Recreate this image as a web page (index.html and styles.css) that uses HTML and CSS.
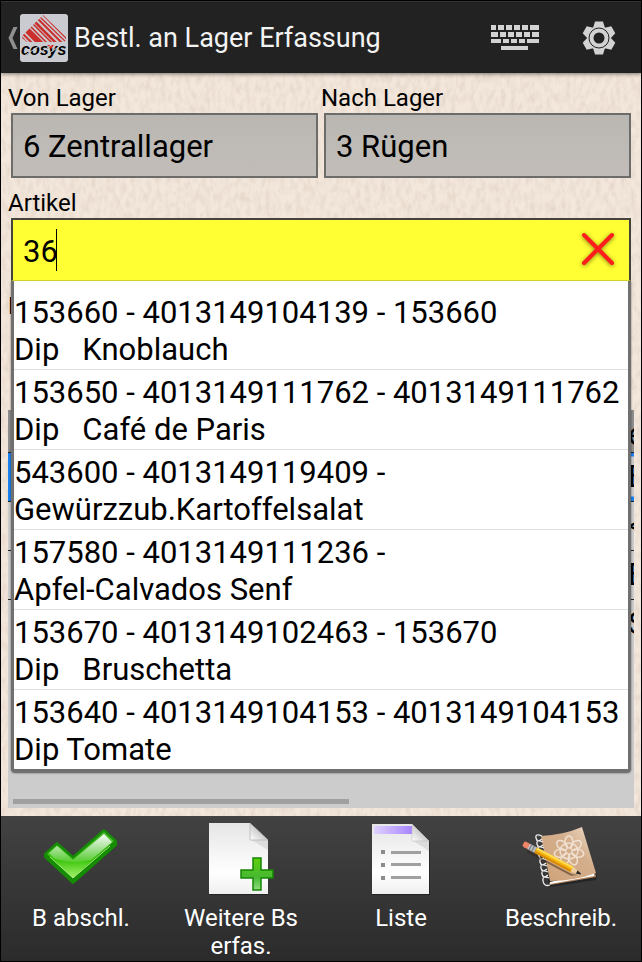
FILE: index.html
```html
<!DOCTYPE html>
<html lang="de">
<head>
    <meta charset="UTF-8">
    <meta name="viewport" content="width=device-width, initial-scale=1">
    <title>Bestl. an Lager Erfassung</title>
    <link rel="stylesheet" href="styles.css">
</head>
<body>
    <header class="topbar">
        <button class="back" type="button" aria-label="Zurück">
            <svg class="chevron" viewBox="0 0 12 22"><path d="M10.500 0h-4L1.500 11l5 11h4l-5-11z" fill="#8f8f8f"/></svg>
            <svg class="logo" viewBox="0 0 48 48">
                <defs>
                    <clipPath id="dach"><path d="M23 1 2 22v2l5 4h37l2-2v-3z"/></clipPath>
                </defs>
                <rect width="48" height="48" rx="3" fill="#c9cbd0"/>
                <g clip-path="url(#dach)" stroke="#cb2f2c" fill="none">
                    <path d="M0 22l9 9" stroke-width="2"/>
                    <path d="M2 19l12 12" stroke-width="2"/>
                    <path d="M6 15l16 16" stroke-width="6"/>
                    <path d="M9 11l20 20M12 9l22 22" stroke-width="1.500"/>
                    <path d="M14 7l24 24" stroke-width="2.500"/>
                    <path d="M17 4l26 26" stroke-width="2"/>
                    <path d="M20 3l28 27M23 1l28 28" stroke-width="1.300"/>
                </g>
                <text x="1" y="41" class="logo-text">cosys</text>
                <path d="M27 31h7l-3 4z" fill="#e02a20"/>
                <path d="M1 44 22 30M12 44l21-14M22 44l21-14" stroke="#c9cbd0" stroke-width="1"/>
            </svg>
        </button>
        <h1>Bestl. an Lager Erfassung</h1>
        <button class="action" type="button" aria-label="Tastatur">
            <svg class="keyboard" viewBox="0 0 48 26" fill="#d2d2d2">
                <path d="M0 0h5v5H0zM7 0h6v5H7zM15 0h6v5h-6zM23 0h6v5h-6zM31 0h6v5h-6zM39 0h9v5h-9z"/>
                <path d="M0 7h7v5H0zM9 7h6v5H9zM17 7h6v5h-6zM25 7h6v5h-6zM33 7h6v5h-6zM41 7h7v5h-7z"/>
                <path d="M0 14h10v4H0zM12 14h6v4h-6zM20 14h6v4h-6zM28 14h6v4h-6zM36 14h12v4H36zM10 21h27v4H10z"/>
            </svg>
        </button>
        <button class="action" type="button" aria-label="Einstellungen">
            <svg class="gear" viewBox="-17 -17 34 34">
                <g fill="#d2d2d2">
                    <circle r="12"/>
                    <path id="zahn" d="M-6-10l2-6.500h8l2 6.500z"/>
                    <use href="#zahn" transform="rotate(60)"/>
                    <use href="#zahn" transform="rotate(120)"/>
                    <use href="#zahn" transform="rotate(180)"/>
                    <use href="#zahn" transform="rotate(240)"/>
                    <use href="#zahn" transform="rotate(300)"/>
                </g>
                <circle r="10" fill="none" stroke="#222" stroke-width="1"/>
                <circle r="5.500" fill="#222"/>
            </svg>
        </button>
    </header>

    <main class="content">
        <!-- Papierstruktur -->
        <svg class="paper" aria-hidden="true">
            <filter id="papier" x="0" y="0" width="100%" height="100%">
                <feTurbulence type="fractalNoise" baseFrequency="0.2 0.1" numOctaves="4" seed="4"/>
                <feColorMatrix values="0 0 0 0 .5  0 0 0 0 .42  0 0 0 0 .34  .5 0 0 0 -.19"/>
            </filter>
            <rect width="100%" height="100%" filter="url(#papier)"/>
        </svg>

        <div class="row">
            <div class="group">
                <label for="von">Von Lager</label>
                <input class="field" type="text" id="von" value="6 Zentrallager" readonly>
            </div>
            <div class="group">
                <label for="nach">Nach Lager</label>
                <input class="field" type="text" id="nach" value="3 Rügen" readonly>
            </div>
        </div>

        <div class="group">
            <label for="artikel">Artikel</label>
            <div class="search">
                <input class="field active" type="text" id="artikel" value="36" autocomplete="off">
                <span class="caret"></span>
                <button class="clear" type="button" aria-label="Löschen">
                    <svg viewBox="0 0 36 36"><path d="M4 4l28 28M32 4L4 32" stroke="#ff1c1c" stroke-width="4" stroke-linecap="round"/></svg>
                </button>
                <ul class="suggestions">
                    <li>153660 - 4013149104139 - 153660<br>Dip   Knoblauch</li>
                    <li>153650 - 4013149111762 - 4013149111762<br>Dip   Café de Paris</li>
                    <li>543600 - 4013149119409 -<br>Gewürzzub.Kartoffelsalat</li>
                    <li>157580 - 4013149111236 -<br>Apfel-Calvados Senf</li>
                    <li>153670 - 4013149102463 - 153670<br>Dip   Bruschetta</li>
                    <li>153640 - 4013149104153 - 4013149104153<br>Dip Tomate</li>
                </ul>
            </div>
        </div>

        <div class="group">
            <label for="menge">Menge</label>
            <input class="field" type="text" id="menge">
        </div>

        <div class="list">
            <table>
                <thead><tr><th></th><th class="edge">e</th></tr></thead>
                <tbody>
                    <tr class="selected"><td></td><td class="edge">E</td></tr>
                    <tr><td></td><td class="edge">&lt;</td></tr>
                    <tr><td></td><td class="edge">E</td></tr>
                    <tr><td></td><td class="edge">S</td></tr>
                </tbody>
            </table>
            <div class="scrollbar"></div>
        </div>
    </main>

    <nav class="bottombar">
        <button type="button">
            <svg viewBox="0 0 72 72">
                <defs>
                    <linearGradient id="gruen" x1="0" y1="0" x2="0" y2="1">
                        <stop offset="0" stop-color="#4dbb35"/><stop offset=".6" stop-color="#38c40a"/><stop offset="1" stop-color="#a5f26a"/>
                    </linearGradient>
                    <linearGradient id="glanz" x1="0" y1="0" x2="0" y2="1">
                        <stop offset="0" stop-color="#fff" stop-opacity=".95"/><stop offset="1" stop-color="#fff" stop-opacity=".15"/>
                    </linearGradient>
                </defs>
                <path d="M1 31v4l27 26 44-38v-5L59 8 28 35 12 21z" fill="#0c4d04" opacity=".6"/>
                <path d="M0 31 12 20l16 14L59 7l12 11v4L28 60 0 34z" fill="#168c05" stroke="#168c05" stroke-width="2" stroke-linejoin="round"/>
                <path d="M2 31l10-9 16 14L59 9l10 9-41 37z" fill="url(#gruen)"/>
                <path d="M4 30l8-7 16 14 31-26 8 8-21 18q-18 4-36-1z" fill="url(#glanz)"/>
                <path d="M5 34l23 21 37-32" fill="none" stroke="#a4ee76" stroke-width="1"/>
            </svg>
            <span>B abschl.</span>
        </button>
        <button type="button">
            <svg viewBox="0 0 72 72">
                <defs>
                    <linearGradient id="blatt" x1="0" y1="0" x2="0" y2="1">
                        <stop offset="0" stop-color="#e6e6e6"/><stop offset=".7" stop-color="#fff"/><stop offset="1" stop-color="#efefef"/>
                    </linearGradient>
                    <linearGradient id="ecke" x1="0" y1="1" x2="1" y2="0">
                        <stop offset="0" stop-color="#fff"/><stop offset=".6" stop-color="#c4c4c4"/>
                    </linearGradient>
                    <linearGradient id="plus" x1="0" y1="0" x2="0" y2="1">
                        <stop offset="0" stop-color="#5fd00a"/><stop offset=".6" stop-color="#46b832"/><stop offset="1" stop-color="#90dc80"/>
                    </linearGradient>
                </defs>
                <path d="M4 0h42l17 18v54H4z" fill="#111" opacity=".5"/>
                <path d="M4 0h41l18 17v54H4z" fill="url(#blatt)"/>
                <path d="M45 16l18 1v10z" fill="#cfcfcf" opacity=".6"/>
                <path d="M45 0l18 17H45z" fill="url(#ecke)" stroke="#aaa" stroke-width=".6"/>
                <path d="M48 35h8v12h12v8H56v12h-8V55H36v-8h12z" fill="url(#plus)" stroke="#168505" stroke-width="1.500"/>
            </svg>
            <span>Weitere Bs erfas.</span>
        </button>
        <button type="button">
            <svg viewBox="0 0 72 72">
                <defs>
                    <linearGradient id="lila">
                        <stop offset="0" stop-color="#e0d2ff"/><stop offset="1" stop-color="#a885ff"/>
                    </linearGradient>
                </defs>
                <path d="M7 2h41l17 17v53H7z" fill="#111" opacity=".5"/>
                <path d="M7 1h40l17 17v53H7z" fill="url(#blatt)"/>
                <path d="M9 3h38v8H9z" fill="url(#lila)"/>
                <path d="M47 17l17 1v10z" fill="#cfcfcf" opacity=".6"/>
                <path d="M47 1l17 17H47z" fill="url(#ecke)" stroke="#bbb" stroke-width=".5"/>
                <path d="M16 27h4v4h-4zM16 40h4v4h-4zM16 53h4v4h-4z" fill="#8c8c8c"/>
                <path d="M26 28h30v3H26zM26 40h30v3H26zM26 53h30v3H26z" fill="#a0a0a0"/>
            </svg>
            <span>Liste</span>
        </button>
        <button type="button">
            <svg viewBox="0 0 72 72">
                <defs>
                    <linearGradient id="buch" x1="1" y1="0" x2="0" y2="1">
                        <stop offset="0" stop-color="#f1dfcc"/><stop offset=".4" stop-color="#d3ae8c"/><stop offset="1" stop-color="#cfa37a"/>
                    </linearGradient>
                </defs>
                <path d="M18 15l39-9 15 47-1 4-47 7z" fill="#111" opacity=".5"/>
                <path d="M24 60l46-11 1 5-46 8z" fill="#b78a63"/>
                <path d="M25 59l44-10v4l-44 8z" fill="#fff"/>
                <path d="M16 13q22-1 41-9l14 46q-21 8-46 8z" fill="url(#buch)"/>
                <g fill="none" stroke="#f5e9dc" stroke-width="1.500" opacity=".85">
                    <ellipse id="blatt1" cx="44" cy="19" rx="4" ry="6"/>
                    <use href="#blatt1" transform="rotate(51 44 28)"/>
                    <use href="#blatt1" transform="rotate(103 44 28)"/>
                    <use href="#blatt1" transform="rotate(154 44 28)"/>
                    <use href="#blatt1" transform="rotate(206 44 28)"/>
                    <use href="#blatt1" transform="rotate(257 44 28)"/>
                    <use href="#blatt1" transform="rotate(309 44 28)"/>
                    <ellipse cx="44" cy="28" rx="9" ry="8"/>
                </g>
                <g fill="none" stroke="#ececec" stroke-width="1.300">
                    <path d="M17 13q-7-3-6 2t6 1M18 19q-7-3-6 2t6 1M19 25q-7-3-6 2t6 1M20 31q-7-3-6 2t6 1M21 37q-7-3-6 2t6 1M22 43q-7-3-6 2t6 1M23 49q-7-3-6 2t6 1M24 55q-7-3-6 3t7 4"/>
                </g>
                <g transform="translate(1 22) rotate(28)">
                    <path d="M4 4h50l6-2-6 4H4z" fill="#3a2410" opacity=".5"/>
                    <rect x="-3" y="-3" width="7" height="6" rx="2" fill="#ef8466"/>
                    <path d="M3-3h8v6H3z" fill="#b9bcc0"/>
                    <path d="M5-3v6M8-3v6" stroke="#777" stroke-width="1"/>
                    <path d="M11-3h41v6H11z" fill="#f6b40e"/>
                    <path d="M11-3h41v2H11z" fill="#ffdd55"/>
                    <path d="M11 1h41v2H11z" fill="#d88a06"/>
                    <path d="M52-3l10 3-10 3z" fill="#edcfa0"/>
                    <path d="M58-1l4 1-4 1z" fill="#222" stroke="#222"/>
                </g>
            </svg>
            <span>Beschreib.</span>
        </button>
    </nav>
</body>
</html>
```
FILE: styles.css
```css
* {
    box-sizing: border-box;
}

body {
    display: flex;
    flex-direction: column;
    min-height: 100vh;
    margin: 0;
    border: 1px solid #000;
    background-color: #f3e6da;
    font-family: Roboto, sans-serif;
    color: #000;
}

button {
    padding: 0;
    border: none;
    background: none;
    font-family: inherit;
    cursor: pointer;
}

svg {
    display: block;
    overflow: visible;
}

/* Kopfzeile */
.topbar {
    display: flex;
    align-items: center;
    height: 72px;
    padding-left: 6px;
    background-color: #222;
    border-top: 1px solid #333;
    box-shadow: 0 1px 4px rgba(0, 0, 0, 0.5);
    position: relative;
    z-index: 3;
}

.topbar h1 {
    flex: 1;
    margin: 0 0 0 6px;
    font-size: 27px;
    font-weight: 400;
    color: #f3f3f3;
    white-space: nowrap;
}

.back {
    display: flex;
    align-items: center;
    gap: 1px;
}

.chevron {
    width: 12px;
    height: 22px;
}

.logo {
    width: 48px;
    height: 48px;
}

.logo-text {
    font-family: "Liberation Sans", sans-serif;
    font-size: 16px;
    font-weight: 700;
    font-style: italic;
}

.action {
    display: grid;
    place-items: center;
    width: 84px;
    height: 100%;
}

.keyboard {
    width: 48px;
    height: 26px;
}

.gear {
    width: 34px;
    height: 34px;
}

/* Formular */
.content {
    flex: 1;
    display: flex;
    flex-direction: column;
    gap: 10px;
    padding: 10px 7px 8px;
    position: relative;
    isolation: isolate;
}

.paper {
    position: absolute;
    inset: 0;
    width: 100%;
    height: 100%;
    z-index: -1;
}

.row {
    display: grid;
    grid-template-columns: repeat(2, minmax(0, 1fr));
}

.group {
    display: flex;
    flex-direction: column;
}

label {
    font-size: 24px;
    line-height: 30px;
}

.field {
    height: 65px;
    min-width: 0;
    margin: 0 3px;
    padding: 2px 10px 0;
    border: 2px solid #6c6c6a;
    border-radius: 0;
    background: linear-gradient(#bab7b3, #c2bdb9);
    font-family: inherit;
    font-size: 31px;
    color: #000;
    outline: none;
}

.search {
    position: relative;
    z-index: 2;
    margin: 0 3px;
}

.field.active {
    display: block;
    width: 100%;
    height: 63px;
    margin: 0;
    border-color: #44443a;
    border-bottom: 1px solid #d8d82c;
    background: #ffff33;
}

.caret {
    position: absolute;
    left: 45px;
    top: 11px;
    width: 1px;
    height: 42px;
    background-color: #000;
}

.clear {
    position: absolute;
    right: 15px;
    top: 13px;
    width: 36px;
    height: 36px;
    filter: drop-shadow(0 1px 2px rgba(90, 70, 0, 0.7));
}

/* Vorschlagsliste */
.suggestions {
    position: absolute;
    top: 100%;
    left: 0;
    right: 0;
    margin: 0;
    padding: 9px 0 0;
    list-style: none;
    background-color: #fff;
    border: 3px solid #707070;
    border-top: none;
    border-radius: 0 0 4px 4px;
    box-shadow: 0 1px 2px rgba(0, 0, 0, 0.6);
}

.suggestions li {
    padding: 4px 0 1px;
    border-bottom: 1px solid #e0e0e0;
    font-size: 31px;
    line-height: 37px;
    white-space: pre;
    overflow: hidden;
}

.suggestions li:last-child {
    border-bottom: none;
}

/* Positionsliste */
.list {
    flex: 1;
    display: flex;
    flex-direction: column;
    justify-content: space-between;
    margin-top: 14px;
    padding-bottom: 4px;
    background-color: #ccc;
    overflow: hidden;
}

.list table {
    width: 100%;
    table-layout: fixed;
    border-collapse: collapse;
    font-size: 31px;
    line-height: 1;
}

.list th {
    height: 42px;
    padding: 8px 0 0;
    background-color: #8e8e8e;
    font-weight: 400;
    text-align: left;
}

.list td {
    height: 49px;
    padding: 0;
    border-top: 1px solid #222;
}

.list .selected td {
    background-color: #1e82f0;
}

.list .edge {
    width: 6px;
    overflow: hidden;
}

.list .selected .edge {
    background: linear-gradient(#1e82f0 4px, #ccc 4px, #ccc 44px, #1e82f0 44px);
}

.scrollbar {
    width: 336px;
    max-width: 100%;
    height: 5px;
    margin-left: 5px;
    background-color: #a0a0a0;
}

/* Fußleiste */
.bottombar {
    display: grid;
    grid-template-columns: repeat(4, 1fr);
    height: 145px;
    background: linear-gradient(#424242, #2b2b2b);
}

.bottombar button {
    display: flex;
    flex-direction: column;
    align-items: center;
    gap: 9px;
    padding: 7px 20px 0;
    font-size: 24px;
    line-height: 28px;
    color: #fff;
}

.bottombar svg {
    flex: none;
    width: 72px;
    height: 72px;
}
```
